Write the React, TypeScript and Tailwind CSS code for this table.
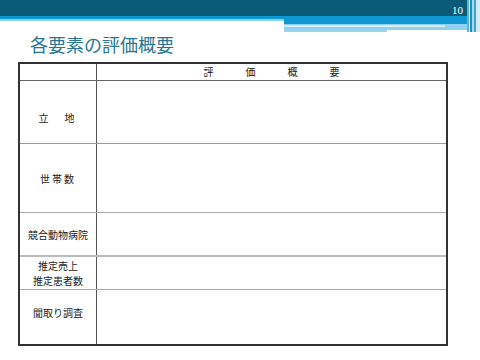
const jp = { fontFamily: '"Noto Sans CJK JP", "Noto Sans", sans-serif' };

type Row = {
  label: React.ReactNode;
  h: string;
  line: string;
  pad?: string;
};

const rows: Row[] = [
  { label: <span className="tracking-[3px]">立　地</span>, h: "h-[63px]", line: "border-b border-[#9a9a9a]", pad: "pt-[10px]" },
  { label: <span className="tracking-[2px]">世帯数</span>, h: "h-[69px]", line: "border-b border-[#a8a8a8]" },
  { label: <span>競合動物病院</span>, h: "h-[44px]", line: "border-b-2 border-[#bcbcbc]" },
  {
    label: (
      <span className="flex flex-col items-center leading-[15px]">
        <span>推定売上</span>
        <span>推定患者数</span>
      </span>
    ),
    h: "h-[33px]",
    line: "border-b border-[#a8a8a8]",
  },
  { label: <span>聞取り調査</span>, h: "h-[54px]", line: "", pad: "pb-[10px]" },
];

function Banner() {
  return (
    <div className="relative h-[34px]">
      {/* decorative header strip */}
      <svg className="absolute inset-0" width="480" height="34" viewBox="0 0 480 34">
        <rect x="0" y="0" width="480" height="16" fill="#0a5b78" />
        <rect x="0" y="16" width="480" height="3" fill="#0f98d4" />
        <rect x="0" y="19" width="284" height="2" fill="#8ccfee" />
        <rect x="284" y="19" width="196" height="5" fill="#0f98d4" />
        <rect x="284" y="24" width="186" height="6" fill="#8fd1ee" />
        <rect x="284" y="25.5" width="161" height="1.2" fill="#ffffff" />
        <rect x="284" y="30" width="103" height="2" fill="#9ad5ef" />
        <rect x="467" y="0" width="2" height="32" fill="#5db4da" />
        <rect x="469" y="0" width="1" height="32" fill="#d3ecf7" />
        <rect x="470" y="0" width="2" height="32" fill="#1d8fc1" />
        <rect x="472" y="0" width="2" height="32" fill="#acdaef" />
        <rect x="474" y="0" width="2" height="32" fill="#3ea3cf" />
        <rect x="476" y="0" width="4" height="32" fill="#d4edf8" />
      </svg>
      <span
        className="absolute left-[452px] top-[3px] text-[11px] leading-[14px] text-white"
        style={{ fontFamily: '"Liberation Serif", serif' }}
      >
        10
      </span>
    </div>
  );
}

export default function App() {
  return (
    <div className="w-[480px] h-[360px] bg-white overflow-hidden" style={jp}>
      <Banner />
      <h1 className="ml-[30px] text-[18px] leading-[20px] h-[20px] text-[#2b7690] font-normal">
        各要素の評価概要
      </h1>

      <div className="ml-[18px] mt-[8px] w-[430px] border-2 border-[#333] text-[10px] text-[#222]">
        {/* header row */}
        <div className="flex h-[17px] border-b border-[#666]">
          <div className="w-[77px] border-r border-[#555]" />
          <div className="flex-1 flex items-center justify-center gap-[32px] leading-none">
            <span>評</span>
            <span>価</span>
            <span>概</span>
            <span>要</span>
          </div>
        </div>

        {rows.map((r, i) => (
          <div key={i} className={`flex ${r.h} ${r.line}`}>
            <div className={`w-[77px] border-r border-[#555] flex items-center justify-center ${r.pad ?? ""}`}>
              {r.label}
            </div>
            <div className="flex-1" />
          </div>
        ))}
      </div>
    </div>
  );
}
